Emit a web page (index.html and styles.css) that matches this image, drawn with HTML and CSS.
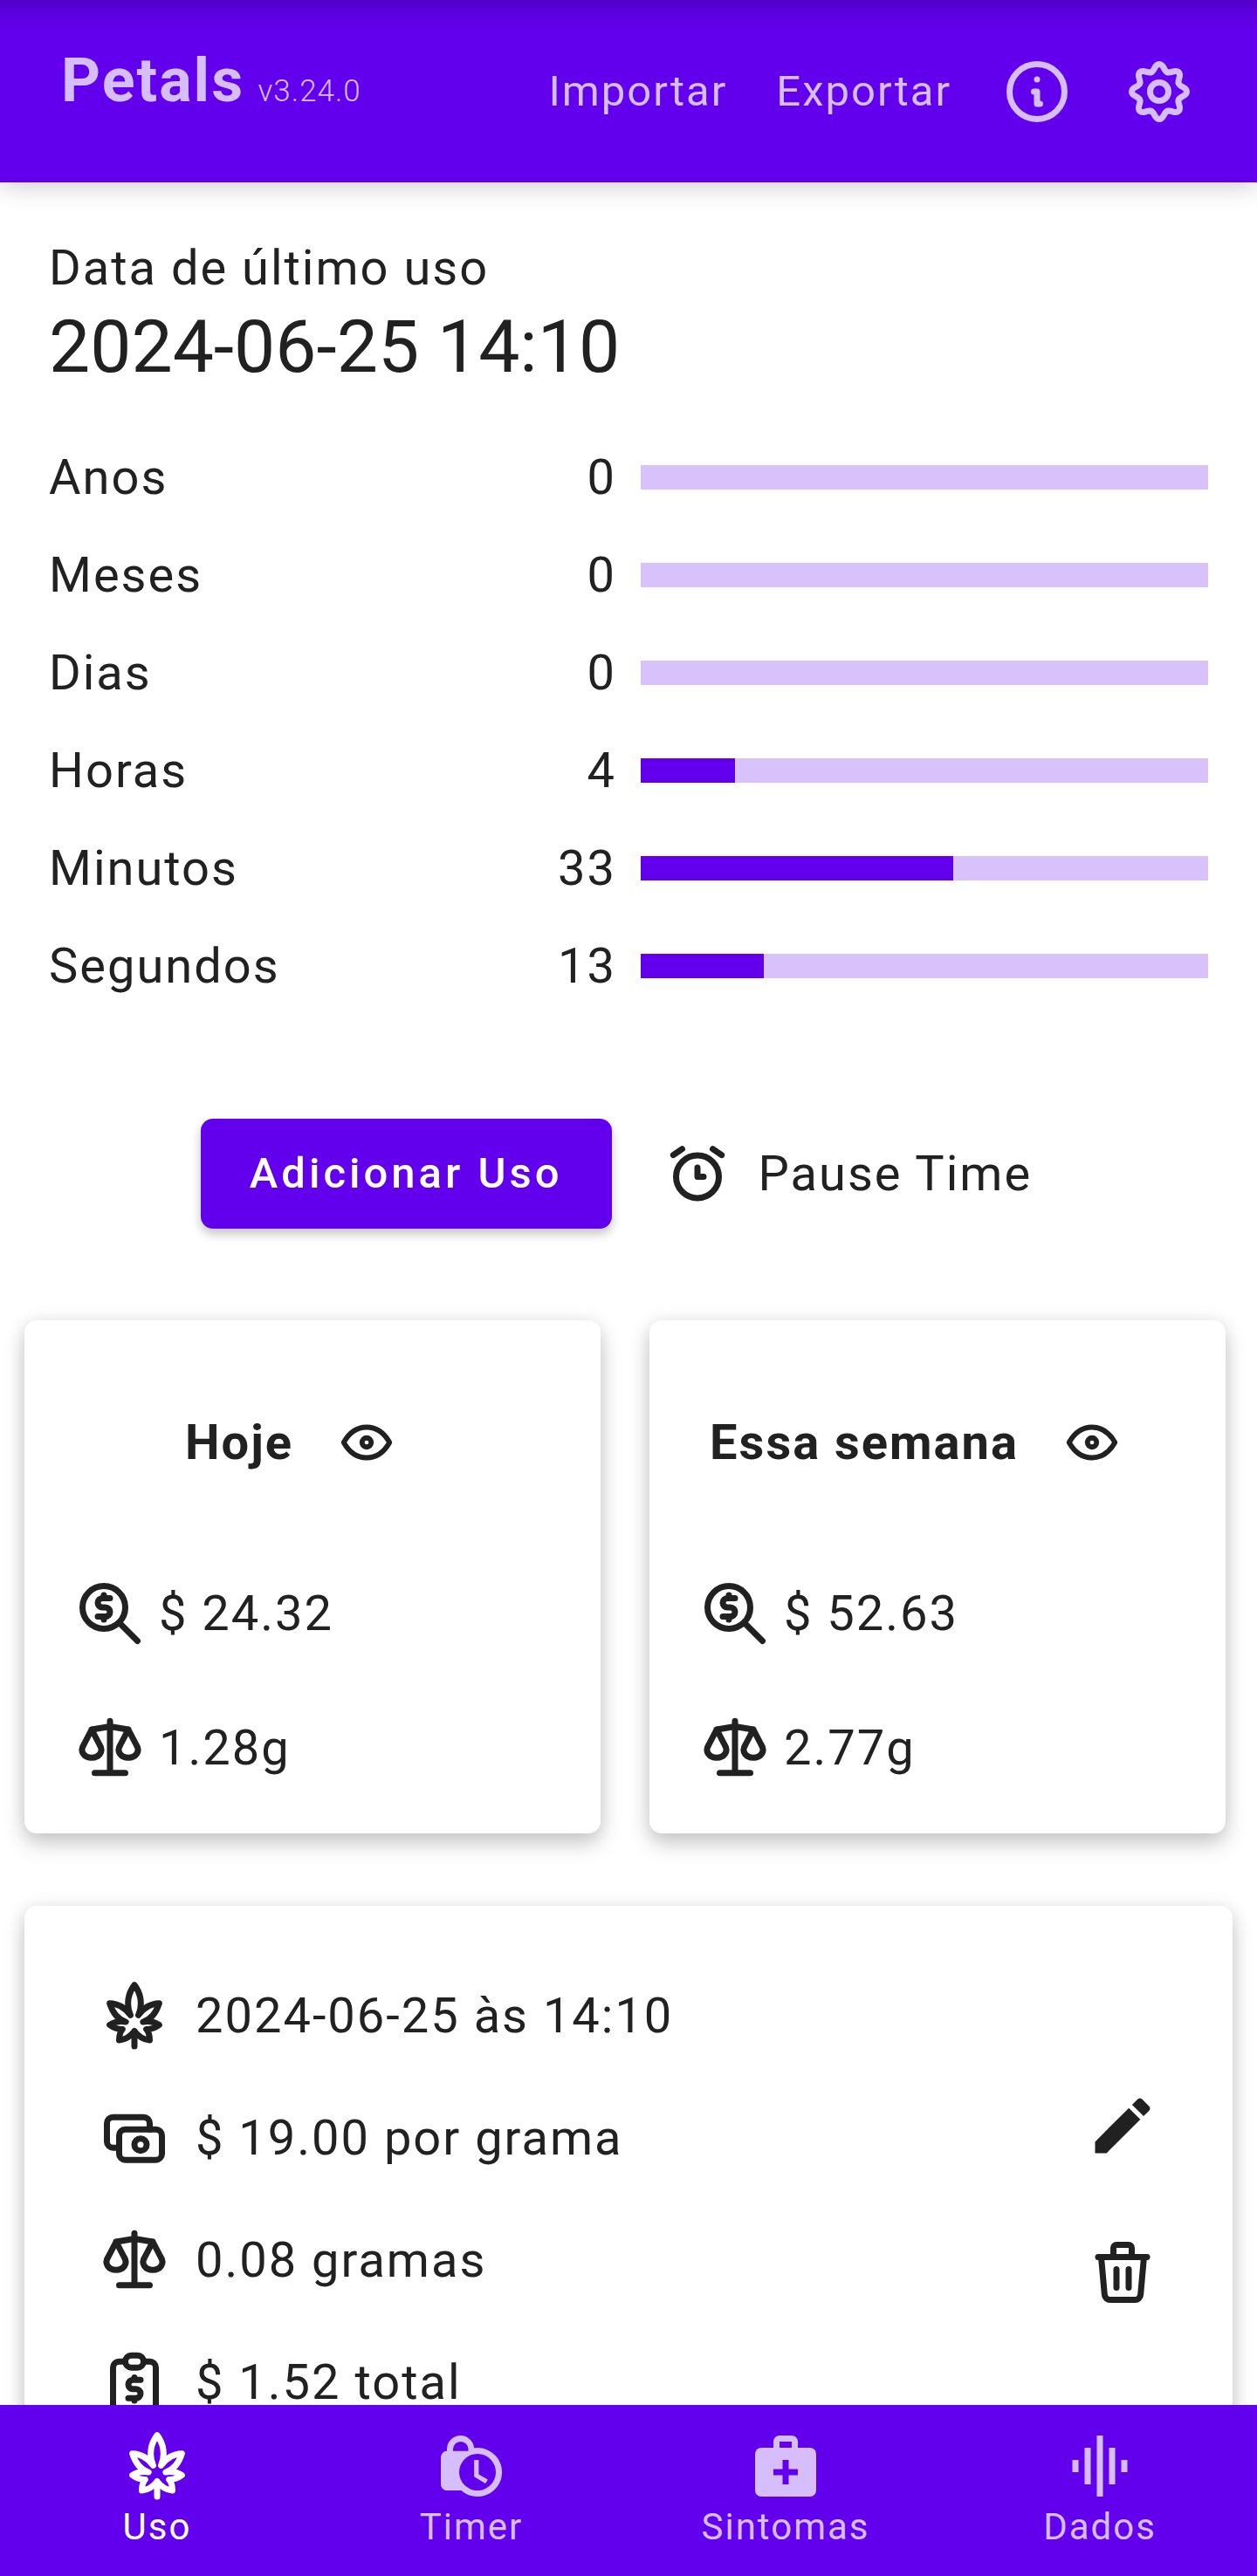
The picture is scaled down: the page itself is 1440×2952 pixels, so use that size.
FILE: index.html
```html
<!DOCTYPE html>
<html lang="pt-BR">
<head>
<meta charset="utf-8">
<meta name="viewport" content="width=device-width, initial-scale=1">
<title>Petals</title>
<link rel="stylesheet" href="styles.css">
</head>
<body>
<svg class="sprite" aria-hidden="true">
  <symbol id="leaf" viewBox="0 0 24 24">
    <path d="M12 17v5M12 1.9C10.700 3.600 9.900 5.700 9.900 8c0 1.300.3 2.700.8 3.800C9.200 9.600 7 8 3.900 7.900c1 3.200 2.700 5.300 5.300 6.100-1.800-.3-3.700 0-5.300 1 1.200.9 2.600 1.400 4.200 1.400C7.200 17.400 7 18.700 7 20c2-.2 3.700-1.200 5-3 1.300 1.800 3 2.800 5 3 0-1.300-.2-2.600-1.100-3.600 1.600 0 3-.5 4.200-1.400-1.600-1-3.500-1.300-5.300-1 2.600-.8 4.300-2.900 5.300-6.100-3.100.1-5.300 1.700-6.800 3.900.5-1.100.8-2.500.8-3.800 0-2.300-.8-4.400-2.100-6.100z"/>
  </symbol>
  <symbol id="scales" viewBox="0 0 24 24">
    <path d="M12 3.200v17M7 20.200h10M6 6l6-1 6 1M6 6l-2.600 5C1.900 13.300 3.700 15.200 6 15.200s4.100-1.900 2.600-4.200zM18 6l-2.600 5c-1.500 2.300.3 4.200 2.600 4.200s4.100-1.900 2.600-4.200z"/>
  </symbol>
  <symbol id="search-dollar" viewBox="0 0 24 24">
    <circle cx="10" cy="10" r="7"/><path d="M15 15l6 6M12 7H9.500a1.500 1.500 0 0 0 0 3h1a1.500 1.500 0 0 1 0 3H8M10 6v1M10 13v1"/>
  </symbol>
  <symbol id="eye" viewBox="0 0 24 24">
    <path d="M3 12c2.300-4.100 5.300-6 9-6s6.700 1.900 9 6c-2.300 4.100-5.300 6-9 6s-6.700-1.900-9-6z"/><circle cx="12" cy="12" r="1.800"/>
  </symbol>
  <symbol id="tooth" viewBox="0 0 24 24">
    <path d="M9.360 5.630C10.650 5.100 10.400 3 12 3s1.350 2.100 2.640 2.630"/>
  </symbol>
</svg>

<div class="app">
  <header class="topbar">
    <h1 class="brand">Petals <small class="version">v3.24.0</small></h1>
    <button class="text-button" type="button">Importar</button>
    <button class="text-button" type="button">Exportar</button>
    <button class="icon-button" type="button" aria-label="Informações">
      <svg class="icon" viewBox="0 0 24 24"><circle cx="12" cy="12" r="9"/><path d="M11 12h1v4h1M12 8v0"/></svg>
    </button>
    <button class="icon-button" type="button" aria-label="Configurações">
      <svg class="icon" viewBox="0 0 24 24">
        <circle cx="12" cy="12" r="3"/>
        <use href="#tooth"/>
        <use href="#tooth" transform="rotate(45 12 12)"/>
        <use href="#tooth" transform="rotate(90 12 12)"/>
        <use href="#tooth" transform="rotate(135 12 12)"/>
        <use href="#tooth" transform="rotate(180 12 12)"/>
        <use href="#tooth" transform="rotate(225 12 12)"/>
        <use href="#tooth" transform="rotate(270 12 12)"/>
        <use href="#tooth" transform="rotate(315 12 12)"/>
      </svg>
    </button>
  </header>

  <main class="content">
    <section class="last-use">
      <p class="caption">Data de último uso</p>
      <h2 class="date">2024-06-25 14:10</h2>
      <ul class="elapsed">
        <li class="unit"><label for="anos">Anos</label><span class="count">0</span><progress class="meter" id="anos" value="0" max="10"></progress></li>
        <li class="unit"><label for="meses">Meses</label><span class="count">0</span><progress class="meter" id="meses" value="0" max="12"></progress></li>
        <li class="unit"><label for="dias">Dias</label><span class="count">0</span><progress class="meter" id="dias" value="0" max="30"></progress></li>
        <li class="unit"><label for="horas">Horas</label><span class="count">4</span><progress class="meter" id="horas" value="4" max="24"></progress></li>
        <li class="unit"><label for="minutos">Minutos</label><span class="count">33</span><progress class="meter" id="minutos" value="33" max="60"></progress></li>
        <li class="unit"><label for="segundos">Segundos</label><span class="count">13</span><progress class="meter" id="segundos" value="13" max="60"></progress></li>
      </ul>
    </section>

    <div class="actions">
      <button class="primary" type="button">Adicionar Uso</button>
      <button class="pause" type="button">
        <svg class="icon" viewBox="0 0 24 24"><circle cx="12" cy="13" r="7"/><path d="M12 10v3h2M4.100 5.900L7 3.900M19.900 5.900L17 3.900"/></svg>
        Pause Time
      </button>
    </div>

    <section class="summaries">
      <article class="card summary">
        <header class="summary-head">
          <h3 class="summary-title">Hoje</h3>
          <button class="eye-button" type="button" aria-label="Mostrar hoje"><svg class="icon icon-small"><use href="#eye"/></svg></button>
        </header>
        <p class="stat"><svg class="icon"><use href="#search-dollar"/></svg>$ 24.32</p>
        <p class="stat"><svg class="icon"><use href="#scales"/></svg>1.28g</p>
      </article>
      <article class="card summary">
        <header class="summary-head">
          <h3 class="summary-title">Essa semana</h3>
          <button class="eye-button" type="button" aria-label="Mostrar essa semana"><svg class="icon icon-small"><use href="#eye"/></svg></button>
        </header>
        <p class="stat"><svg class="icon"><use href="#search-dollar"/></svg>$ 52.63</p>
        <p class="stat"><svg class="icon"><use href="#scales"/></svg>2.77g</p>
      </article>
    </section>

    <article class="card entry">
      <ul class="details">
        <li class="detail"><svg class="icon"><use href="#leaf"/></svg>2024-06-25 às 14:10</li>
        <li class="detail">
          <svg class="icon" viewBox="0 0 24 24"><rect x="7" y="9.200" width="14" height="10" rx="2"/><circle cx="14" cy="14.200" r="2"/><path d="M7 15.200H5a2 2 0 0 1-2-2v-6a2 2 0 0 1 2-2h10a2 2 0 0 1 2 2v2"/></svg>
          $ 19.00 por grama
        </li>
        <li class="detail"><svg class="icon"><use href="#scales"/></svg>0.08 gramas</li>
        <li class="detail">
          <svg class="icon" viewBox="0 0 24 24"><path d="M9 5.200H7a2 2 0 0 0-2 2v12a2 2 0 0 0 2 2h10a2 2 0 0 0 2-2v-12a2 2 0 0 0-2-2h-2"/><rect x="9" y="3.200" width="6" height="4" rx="2"/><path d="M14 11.200h-2.500a1.500 1.500 0 0 0 0 3h1a1.500 1.500 0 0 1 0 3H10M12 10.400v.8M12 17.200v.8"/></svg>
          $ 1.52 total
        </li>
      </ul>
      <div class="entry-actions">
        <button class="square-button" type="button" aria-label="Editar">
          <svg class="icon icon-solid" viewBox="0 0 24 24"><path d="M20.710 7.040c.39-.39.39-1.040 0-1.410l-2.340-2.340c-.37-.39-1.020-.39-1.410 0l-1.840 1.830 3.750 3.750M3 17.250V21h3.750L17.810 9.930l-3.750-3.750z"/></svg>
        </button>
        <button class="square-button" type="button" aria-label="Excluir">
          <svg class="icon" viewBox="0 0 24 24"><path d="M4 7h16M9 7V4a1 1 0 0 1 1-1h4a1 1 0 0 1 1 1v3M5 7l1.100 12.300A1.800 1.800 0 0 0 8 21h8a1.800 1.800 0 0 0 1.900-1.700L19 7M10 11v6M14 11v6"/></svg>
        </button>
      </div>
    </article>
  </main>

  <nav class="tabs">
    <a class="tab tab-active" href="#uso" aria-current="page"><svg class="icon"><use href="#leaf"/></svg>Uso</a>
    <a class="tab" href="#timer">
      <svg class="icon icon-solid" viewBox="0 0 24 24"><path fill-rule="evenodd" d="M8.500 2A4.500 4.500 0 0 1 12.900 6.100A8 8 0 1 1 8.700 20H4a2 2 0 0 1-2-2V9.100a2 2 0 0 1 2-2V6.500A4.500 4.500 0 0 1 8.500 2zM8.500 4A2.500 2.500 0 0 0 6 6.500v.6h5v-.6A2.500 2.500 0 0 0 8.500 4zM14 8a6 6 0 1 0 0 12a6 6 0 0 0 0-12zM12.900 10h1.500v4.700l3 1.700-.8 1.300-3.700-2.200z"/></svg>
      Timer
    </a>
    <a class="tab" href="#sintomas">
      <svg class="icon icon-solid" viewBox="0 0 24 24"><path fill-rule="evenodd" d="M8 6V4a2 2 0 0 1 2-2h4a2 2 0 0 1 2 2v2h4a2 2 0 0 1 2 2v12a2 2 0 0 1-2 2H4a2 2 0 0 1-2-2V8a2 2 0 0 1 2-2zM10 4v2h4V4zM11 10v3H8v2h3v3h2v-3h3v-2h-3v-3z"/></svg>
      Sintomas
    </a>
    <a class="tab" href="#dados">
      <svg class="icon icon-solid" viewBox="0 0 24 24"><path d="M3 10h2v4H3zM7 6h2v12H7zM11 2h2v20h-2zM15 6h2v12h-2zM19 10h2v4h-2z"/></svg>
      Dados
    </a>
  </nav>
</div>
</body>
</html>
```
FILE: styles.css
```css
:root {
  --purple: #6200ee;
  --lilac: #d6bdfb;
  --track: #d9c2fb;
  --ink: #212121;
}

* {
  box-sizing: border-box;
}

body {
  margin: 0;
  background: #fff;
  color: var(--ink);
  font-family: Roboto, sans-serif;
  font-size: 56px;
  line-height: 84px;
  letter-spacing: 2px;
}

h1, h2, h3, p, ul {
  margin: 0;
  padding: 0;
  list-style: none;
}

button {
  margin: 0;
  padding: 0;
  border: 0;
  background: none;
  color: inherit;
  font: inherit;
  letter-spacing: inherit;
  cursor: pointer;
}

.sprite {
  display: none;
}

.icon {
  display: block;
  flex: none;
  width: 84px;
  height: 84px;
  fill: none;
  stroke: currentColor;
  stroke-width: 2;
  stroke-linecap: round;
  stroke-linejoin: round;
}

.icon-small {
  width: 70px;
  height: 70px;
}

.icon-solid {
  fill: currentColor;
  stroke: none;
}

.app {
  display: flex;
  flex-direction: column;
  height: 100vh;
}

/* Top bar */
.topbar {
  position: relative;
  z-index: 1;
  display: flex;
  align-items: center;
  flex: none;
  padding: 56px 42px 56px 70px;
  background: linear-gradient(#5000c4, #5a00da 12px, var(--purple) 36px);
  box-shadow: 0 4px 28px rgba(0, 0, 0, 0.2);
  color: var(--lilac);
}

.brand {
  flex: 1;
  padding-bottom: 12px;
  font-size: 70px;
  font-weight: 700;
  line-height: 72px;
}

.version {
  font-size: 35px;
  font-weight: 300;
  letter-spacing: 1px;
  margin-left: -4px;
}

.text-button {
  padding: 0 28px;
  font-size: 49px;
}

.icon-button {
  padding: 0 28px;
}

/* Scrolling content */
.content {
  flex: 1;
  min-height: 0;
  overflow-y: auto;
  scrollbar-width: none;
  padding-bottom: 56px;
}

.last-use {
  padding: 56px 56px 0;
}

.date {
  font-size: 84px;
  font-weight: 400;
  line-height: 98px;
  letter-spacing: 0;
}

.elapsed {
  margin-top: 44px;
}

.unit {
  display: grid;
  grid-template-columns: 1fr auto calc(50% - 14px);
  align-items: center;
  height: 112px;
}

.count {
  padding-right: 28px;
}

.meter {
  appearance: none;
  display: block;
  width: 100%;
  height: 28px;
  border: 0;
  background: var(--track);
}

.meter::-webkit-progress-bar {
  background: var(--track);
}

.meter::-webkit-progress-value {
  background: var(--purple);
}

.meter::-moz-progress-bar {
  background: var(--purple);
}

.actions {
  display: flex;
  justify-content: center;
  gap: 28px;
  margin-top: 119px;
}

.primary {
  height: 126px;
  padding: 0 56px;
  border-radius: 14px;
  background: var(--purple);
  box-shadow: 0 6px 12px rgba(0, 0, 0, 0.24);
  color: #fff;
  font-size: 49px;
  font-weight: 500;
  letter-spacing: 4px;
}

.pause {
  display: flex;
  align-items: center;
  gap: 28px;
  padding: 0 28px;
}

/* Cards */
.card {
  border-radius: 14px;
  background: #fff;
  box-shadow: 0 12px 24px rgba(0, 0, 0, 0.2), 0 0 20px rgba(0, 0, 0, 0.08);
}

.summaries {
  display: grid;
  grid-template-columns: 1fr 1fr;
  gap: 56px;
  margin: 105px 36px 0 28px;
}

.summary {
  padding: 56px 56px 21px;
}

.summary-head {
  display: flex;
  align-items: center;
  justify-content: center;
  margin: 0 -14px 35px;
}

.summary-title {
  font-size: 56px;
  font-weight: 700;
  white-space: nowrap;
}

.eye-button {
  display: grid;
  place-items: center;
  flex: none;
  width: 168px;
  height: 168px;
}

.stat {
  display: flex;
  align-items: center;
  gap: 14px;
  height: 154px;
}

.entry {
  display: flex;
  align-items: center;
  justify-content: space-between;
  margin: 83px 28px 0;
  padding: 56px 42px 56px 84px;
}

.detail {
  display: flex;
  align-items: center;
  gap: 28px;
  height: 140px;
}

.square-button {
  display: grid;
  place-items: center;
  width: 168px;
  height: 168px;
}

/* Bottom tabs */
.tabs {
  display: grid;
  grid-template-columns: repeat(4, 1fr);
  flex: none;
  padding: 28px 0;
  background: var(--purple);
}

.tab {
  display: flex;
  flex-direction: column;
  align-items: center;
  color: var(--lilac);
  font-size: 42px;
  line-height: 56px;
  text-decoration: none;
}

.tab-active {
  color: #fff;
}
```
